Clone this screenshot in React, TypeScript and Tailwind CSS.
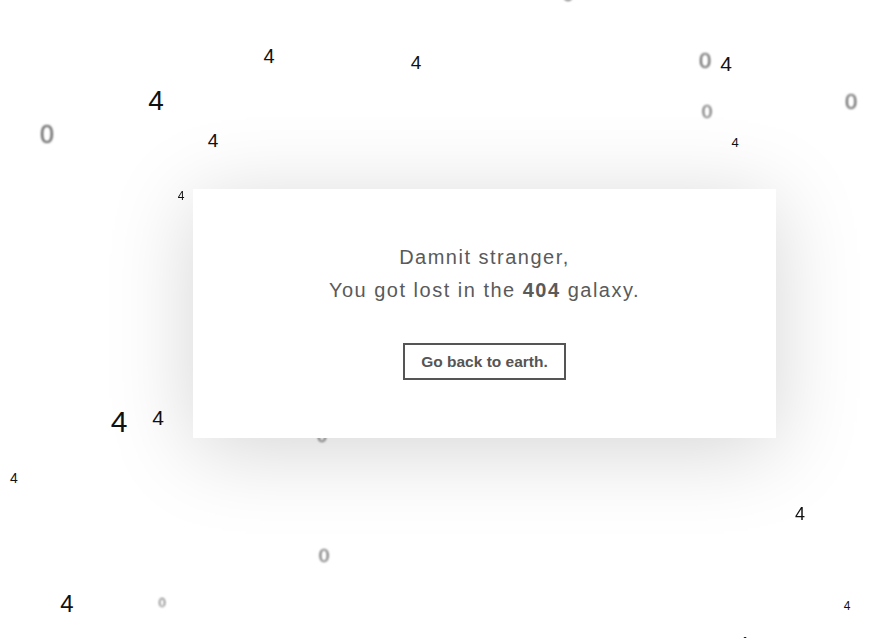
import React from "react";

type Digit = { c: string; x: number; y: number; size: number; blur?: number };

// floating digits of the 404 "galaxy" (center coords)
const DIGITS: Digit[] = [
  { c: "0", x: 568, y: -6, size: 20, blur: 1.2 },
  { c: "4", x: 269, y: 56, size: 20 },
  { c: "4", x: 416, y: 62, size: 19 },
  { c: "0", x: 705, y: 61, size: 22, blur: 1.2 },
  { c: "4", x: 726, y: 63, size: 21 },
  { c: "4", x: 156, y: 101, size: 28 },
  { c: "0", x: 707, y: 111, size: 19, blur: 1.2 },
  { c: "0", x: 851, y: 102, size: 22, blur: 1.2 },
  { c: "0", x: 47, y: 134, size: 25, blur: 1.2 },
  { c: "4", x: 213, y: 140, size: 19 },
  { c: "4", x: 735, y: 142, size: 13 },
  { c: "4", x: 181, y: 196, size: 12, blur: 0.5 },
  { c: "4", x: 200, y: 228, size: 18 },
  { c: "4", x: 119, y: 422, size: 30 },
  { c: "4", x: 158, y: 417, size: 21 },
  { c: "0", x: 322, y: 436, size: 18, blur: 1.2 },
  { c: "4", x: 14, y: 478, size: 14 },
  { c: "4", x: 800, y: 514, size: 18, blur: 0.5 },
  { c: "0", x: 324, y: 555, size: 19, blur: 1.2 },
  { c: "4", x: 67, y: 604, size: 24 },
  { c: "0", x: 162, y: 602, size: 13, blur: 1 },
  { c: "4", x: 847, y: 606, size: 12 },
  { c: "4", x: 743, y: 644, size: 20 },
];

export default function App() {
  return (
    <div className="relative h-[638px] w-[895px] overflow-hidden bg-white [font-family:'Liberation_Sans',Arial,sans-serif]">
      {/* Background digits */}
      {DIGITS.map((d, i) => (
        <span
          key={i}
          className={`absolute leading-none -translate-x-1/2 -translate-y-1/2 ${d.c === "0" ? "text-[#555]" : "text-[#111]"}`}
          style={{
            left: d.x,
            top: d.y,
            fontSize: d.size,
            filter: d.blur ? `blur(${d.blur}px)` : undefined,
          }}
        >
          {d.c}
        </span>
      ))}

      {/* Card */}
      <div className="relative z-10 ml-[193px] mt-[189px] flex h-[249px] w-[583px] flex-col items-center bg-white pt-[52px] text-[#5a5a5a] shadow-[0_12px_80px_rgba(0,0,0,0.17)]">
        <p className="text-[20px] leading-[33px] tracking-[1.5px]">Damnit stranger,</p>
        <p className="text-[20px] leading-[33px] tracking-[1.5px]">
          You got lost in the <strong className="font-bold">404</strong> galaxy.
        </p>
        <button className="mt-[36px] border-2 border-[#555] px-[16px] py-[8px] text-[15.5px] font-bold leading-[17px] text-[#555]">
          Go back to earth.
        </button>
      </div>
    </div>
  );
}
